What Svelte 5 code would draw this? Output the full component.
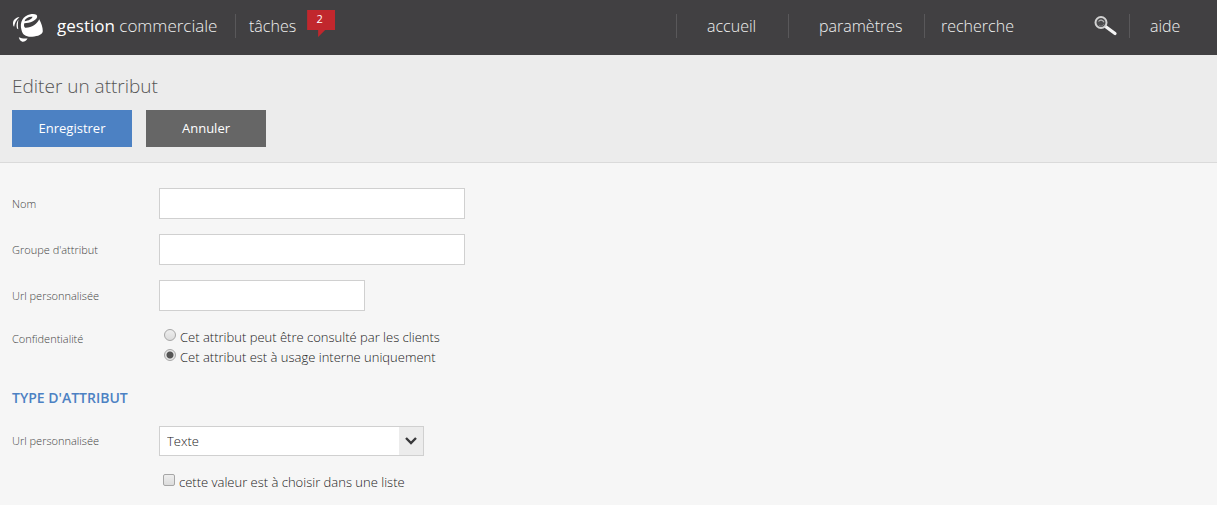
<script>
  let name = $state('');
  let group = $state('');
  let url = $state('');
  let privacy = $state('internal');
  let type = $state('Texte');
  let fromList = $state(false);
  let query = $state('');
</script>

<header>
  <a class="brand" href="#home">
    <svg class="logo" width="32" height="32" viewBox="0 0 32 32" aria-hidden="true">
      <path fill="#fff" fill-rule="evenodd" d="M9.500 20C7.300 12 11 5.500 18.500 4.200c4.300-.7 7.300.4 6.600 3C24 10.500 18 13 12.300 13.200c-.6 2-.3 3.900.9 4.500C19.500 18 25 14.300 27.200 9.300c2.200 3.800 3.600 8.200 3.600 12-.5 3.400-4.600 5-10.600 5.400-6 .4-9.700-1.700-10.700-6.700zM12.500 11.200c4.200-.4 7.700-2.300 8-4.400-2.800-.7-7 1-8 4.400z"/>
      <path fill="#fff" d="M7.500 7C3.500 7.800 1 10 1 13.500c0 1.500.4 2.600 1.100 3.300C2.600 13.200 4.300 9.800 7.500 7z"/>
      <path fill="#fff" d="M6.500 9.500C4.500 12 4 15 5 18.500l1.300.8c-.6-3-.5-6.500.2-9.800z"/>
      <path fill="#fff" d="M6.800 27.300c2.400 1.200 5.200 1.500 8.800 1.200-1.600 2.500-3.500 3.500-5.300 3.200-1.800-.4-3-2.200-3.500-4.400z"/>
    </svg>
    <span><b>gestion</b> commerciale</span>
  </a>
  <a class="tasks" href="#tasks">
    tâches
    <span class="badge">2</span>
  </a>
  <nav>
    <a class="item" href="#accueil">accueil</a>
    <a class="item wide" href="#parametres">paramètres</a>
    <form class="search" role="search" onsubmit={(e) => e.preventDefault()}>
      <input type="text" placeholder="recherche" aria-label="recherche" bind:value={query} />
      <button aria-label="Lancer la recherche">
        <svg width="24" height="22" viewBox="0 0 24 22" aria-hidden="true">
          <path d="M11.500 11.500l9.500 7" stroke="#f4f4f4" stroke-width="3.200" stroke-linecap="round"/>
          <circle cx="7" cy="7.500" r="5.500" fill="#4c4c4e" stroke="#d2d2d2" stroke-width="2"/>
          <path d="M4.500 6.500c1.500-2 4-2 5.500.7" fill="none" stroke="#b4b4b4" stroke-width="1.200"/>
          <path d="M5 10.500c2 1 4 .5 5-1.500" fill="none" stroke="#78787a"/>
        </svg>
      </button>
    </form>
    <a class="item help" href="#aide">aide</a>
  </nav>
</header>

<section class="title">
  <h1>Editer un attribut</h1>
  <div class="actions">
    <button class="primary" type="submit" form="attribute">Enregistrer</button>
    <button type="button">Annuler</button>
  </div>
</section>

<form class="fields" id="attribute" onsubmit={(e) => e.preventDefault()}>
  <div class="row">
    <label for="name">Nom</label>
    <input class="text" id="name" type="text" bind:value={name} />
  </div>
  <div class="row">
    <label for="group">Groupe d'attribut</label>
    <input class="text" id="group" type="text" bind:value={group} />
  </div>
  <div class="row">
    <label for="url">Url personnalisée</label>
    <input class="text short" id="url" type="text" bind:value={url} />
  </div>
  <div class="row">
    <span id="privacy">Confidentialité</span>
    <div class="choices" role="radiogroup" aria-labelledby="privacy">
      <label><input type="radio" name="privacy" value="public" bind:group={privacy} />Cet attribut peut être consulté par les clients</label>
      <label><input type="radio" name="privacy" value="internal" bind:group={privacy} />Cet attribut est à usage interne uniquement</label>
    </div>
  </div>

  <h2>Type d'attribut</h2>

  <div class="row">
    <label for="type">Url personnalisée</label>
    <div class="select">
      <select id="type" bind:value={type}>
        <option>Texte</option>
      </select>
      <span class="arrow">
        <svg width="12" height="8" viewBox="0 0 12 8" aria-hidden="true">
          <path d="M1 1l5 5 5-5" fill="none" stroke="#38383a" stroke-width="2.400"/>
        </svg>
      </span>
    </div>
  </div>
  <label class="check"><input type="checkbox" bind:checked={fromList} />cette valeur est à choisir dans une liste</label>
</form>

<style>
  :global(body) {
    margin: 0;
    background: #f6f6f6;
    font-family: "Open Sans", "Noto Sans", sans-serif;
    font-weight: 300;
    color: #222;
  }
  a { color: inherit; text-decoration: none; }
  input, button, select { font: inherit; box-sizing: border-box; margin: 0; }

  header {
    display: flex;
    align-items: center;
    height: 55px;
    box-sizing: border-box;
    padding-bottom: 3px;
    background: #414042;
    color: #f0f0f0;
    font-size: 16px;
    line-height: 24px;
    white-space: nowrap;
  }
  .brand { display: flex; align-items: center; gap: 13px; width: 223px; padding-left: 12px; font-size: 17px; }
  .brand b { font-weight: 400; color: #fff; }
  .logo { flex: none; }
  .tasks { display: flex; padding-left: 13px; border-left: 1px solid #59585a; gap: 11px; }
  .badge {
    width: 28px;
    height: 27px;
    margin: -4px 0 -3px;
    background: #c1272d;
    clip-path: polygon(0 0, 100% 0, 100% 20px, 18px 20px, 11px 100%, 11px 20px, 0 20px);
    color: #fff;
    font-size: 11px;
    line-height: 18px;
    text-align: center;
    text-indent: -3px;
    font-weight: 400;
  }
  nav { display: flex; margin-left: auto; }
  .item { box-sizing: border-box; width: 112px; padding-left: 30px; border-left: 1px solid #59585a; }
  .wide { width: 136px; }
  .help { width: 88px; padding-left: 20px; }
  .search {
    display: flex;
    align-items: center;
    box-sizing: border-box;
    width: 205px;
    padding: 0 11px 0 16px;
    border-left: 1px solid #59585a;
  }
  .search input { flex: 1; min-width: 0; height: 24px; padding: 0; border: 0; background: none; color: inherit; }
  .search input::placeholder { color: #f0f0f0; opacity: 1; }
  .search button { display: flex; padding: 0; border: 0; background: none; }

  .title { padding: 16px 12px 15px; background: #ececec; border-bottom: 1px solid #dadada; }
  h1 { margin: 0 0 9px; font-size: 19px; line-height: 30px; font-weight: 300; color: #555; }
  .actions { display: flex; gap: 14px; }
  .actions button {
    width: 120px;
    height: 37px;
    padding: 0 0 1px;
    border: 0;
    background: #666;
    color: #fff;
    font-size: 13px;
    font-weight: 400;
  }
  .actions .primary { background: #4c81c3; }

  .fields { padding: 25px 12px 12px; font-size: 13px; line-height: 20px; }
  .row { display: grid; grid-template-columns: 147px 1fr; align-items: center; margin-bottom: 15px; }
  .row > label, .row > span { font-size: 11px; color: #444; }
  .row > span { align-self: start; padding-top: 3px; }
  .text { width: 306px; height: 31px; padding: 0 7px; border: 1px solid #d0d0d0; background: #fff; }
  .short { width: 206px; }
  .choices { display: grid; padding: 1px 0 0 5px; }
  .choices label, .check { display: flex; align-items: center; gap: 4px; }

  input[type="radio"], input[type="checkbox"] {
    appearance: none;
    flex: none;
    width: 12px;
    height: 12px;
    margin-bottom: 4px;
    border: 1px solid #a6a6a6;
    background: linear-gradient(#eee, #dcdcdc);
  }
  input[type="radio"] { border-radius: 50%; }
  input[type="radio"]:checked { background: radial-gradient(circle, #555 0 3px, #e6e6e6 4px); }
  input[type="checkbox"] { border-radius: 2px; }
  input[type="checkbox"]:checked { background: #666; }

  h2 { margin: 21px 0 18px; font-size: 14px; line-height: 20px; font-weight: 600; color: #4c81c3; text-transform: uppercase; }

  .select { display: grid; width: 265px; height: 30px; }
  select {
    grid-area: 1 / 1;
    appearance: none;
    padding: 0 30px 0 7px;
    border: 1px solid #d0d0d0;
    border-radius: 0;
    background: #fff;
    color: #222;
  }
  .arrow {
    grid-area: 1 / 1;
    justify-self: end;
    display: grid;
    place-items: center;
    width: 24px;
    margin: 1px;
    background: #ececec;
    pointer-events: none;
  }
  .check { padding: 1px 0 0 151px; }
</style>
